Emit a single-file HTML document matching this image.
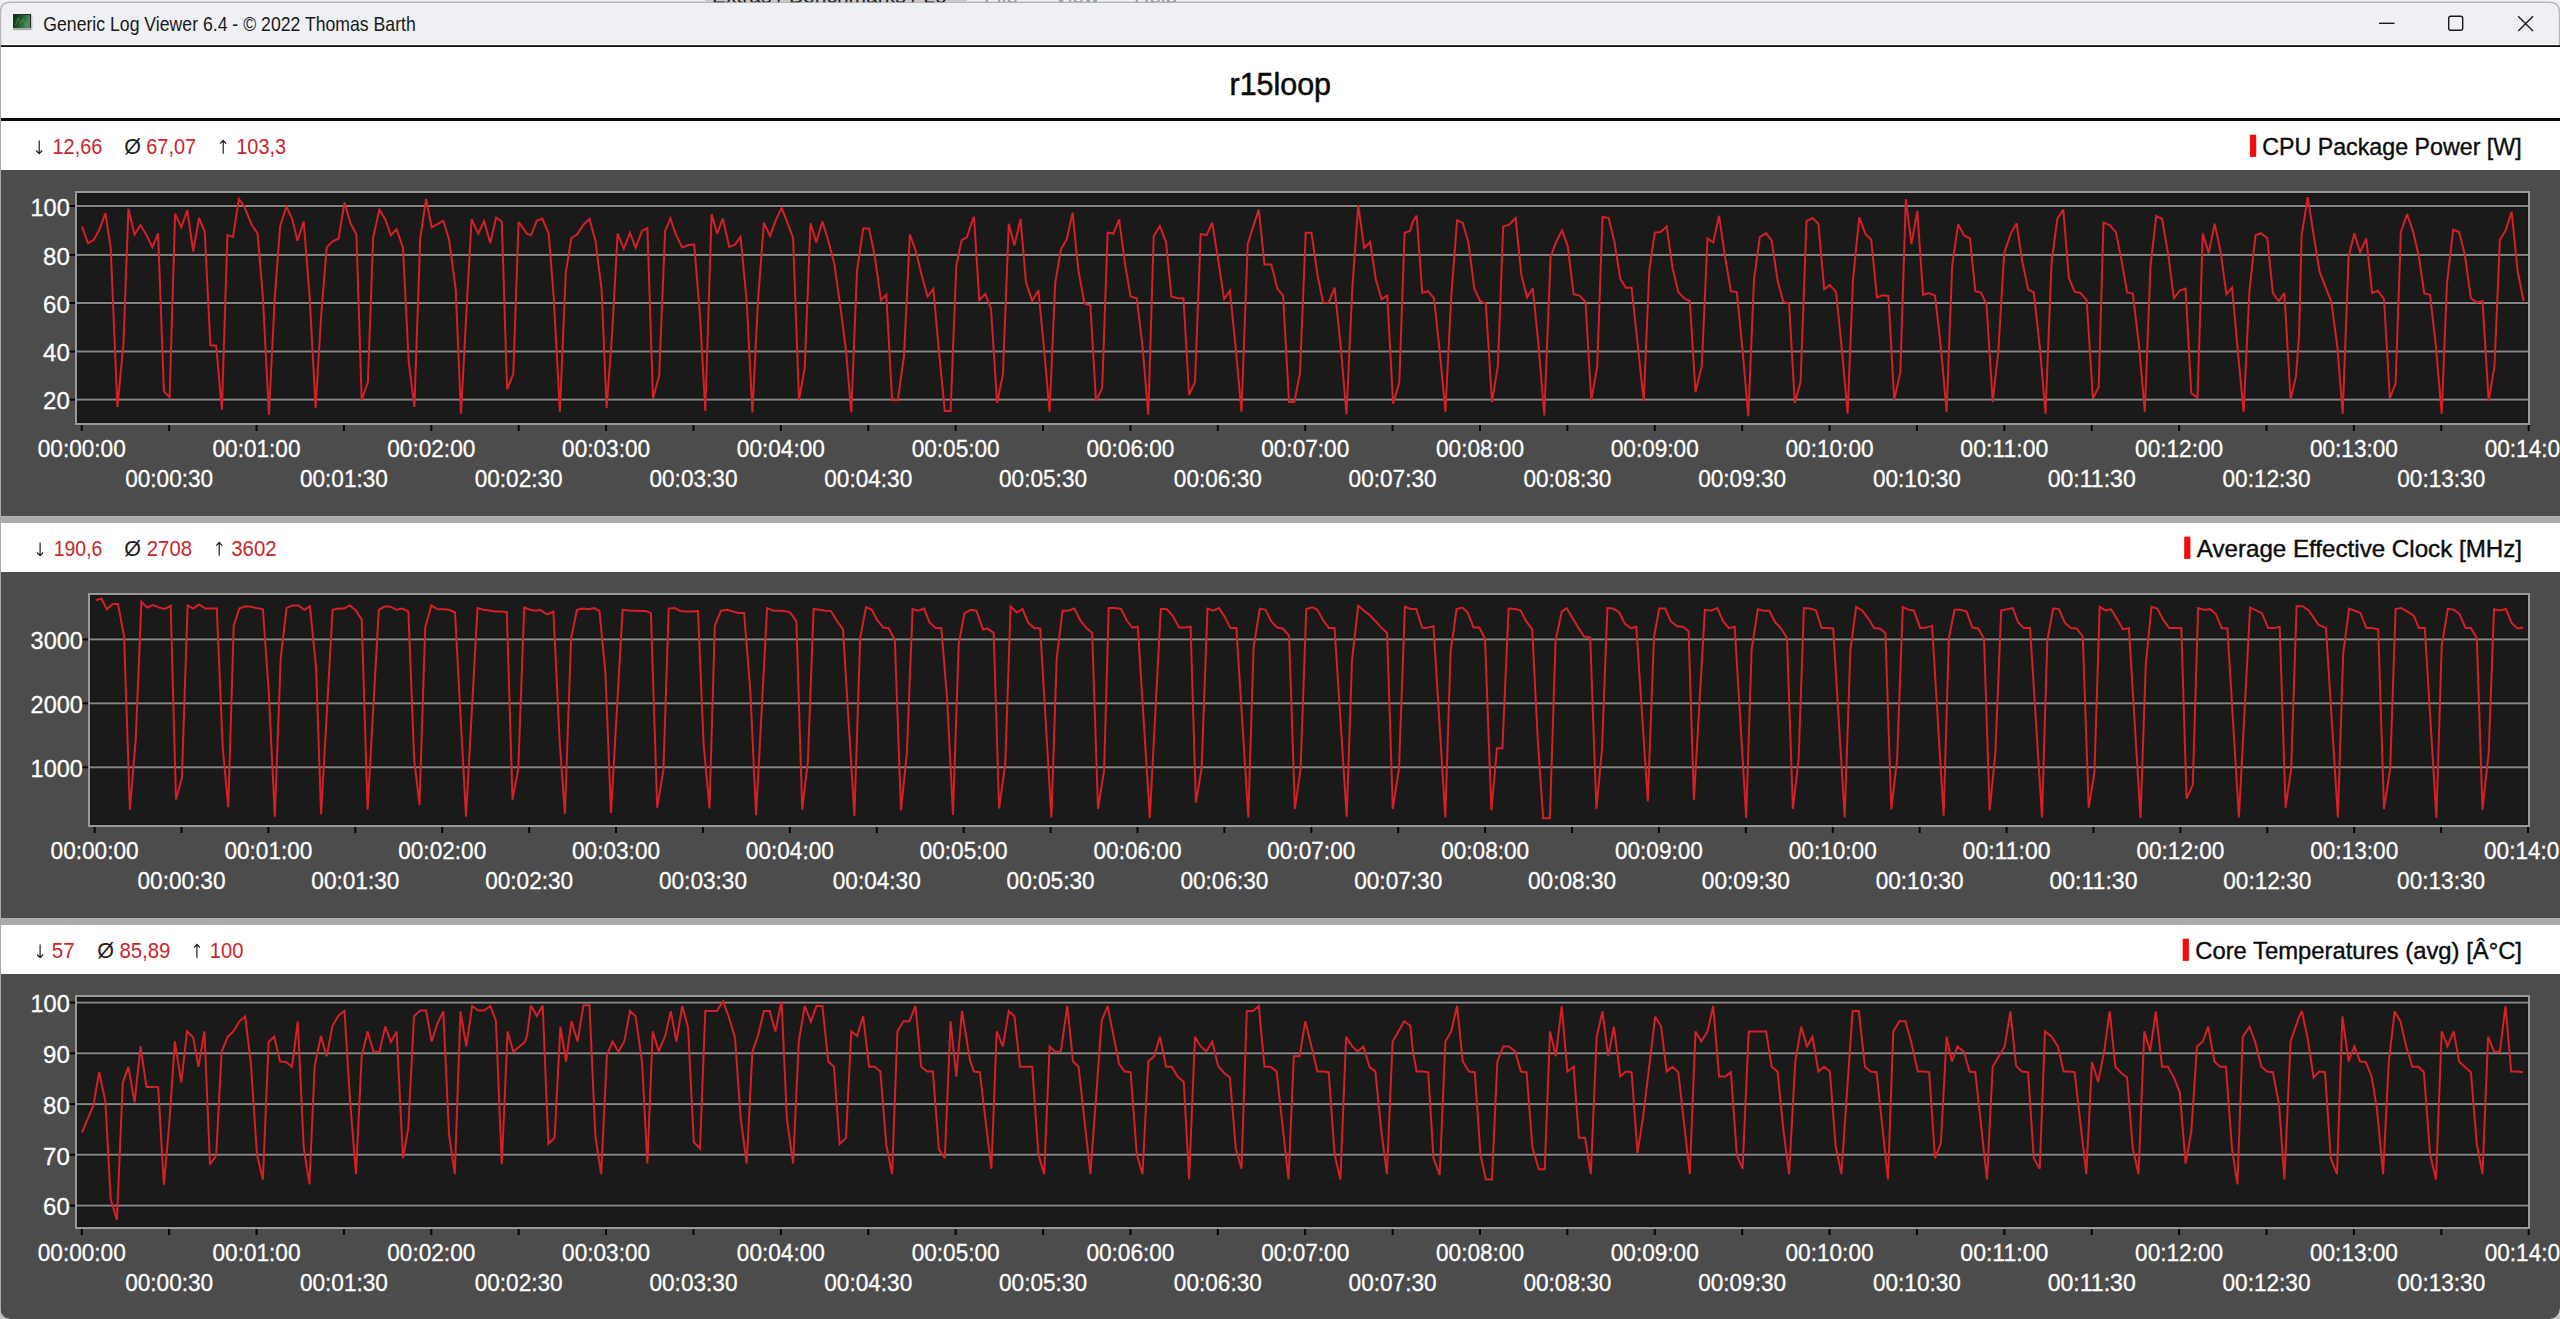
<!DOCTYPE html>
<html><head><meta charset="utf-8"><title>Generic Log Viewer</title>
<style>html,body{margin:0;padding:0;background:#fff;overflow:hidden}svg{display:block}text{font-family:"Liberation Sans", sans-serif}</style>
</head><body>
<svg width="2560" height="1319" viewBox="0 0 2560 1319">
<rect x="0" y="0" width="2560" height="1319" fill="#ffffff"/>
<rect x="0" y="0" width="2560" height="44" fill="#eff0f4"/>
<rect x="0" y="0" width="2560" height="1" fill="#f3f3f3"/>
<path d="M0.5 46 L0.5 12 Q0.5 2.2 10 2.2 L2549 2.2 Q2559.5 2.2 2559.5 12 L2559.5 46" fill="none" stroke="#b7b7bb" stroke-width="1.4"/>
<defs><linearGradient id="ig" x1="0" y1="0" x2="1" y2="0.3"><stop offset="0" stop-color="#0d2e12"/><stop offset="0.5" stop-color="#1f5a2a"/><stop offset="1" stop-color="#4d8a5c"/></linearGradient><clipPath id="menuclip"><rect x="0" y="0" width="2560" height="2.2"/></clipPath></defs>
<rect x="13" y="14" width="18" height="16" fill="#2a2a2a"/>
<rect x="14" y="15" width="16" height="13" fill="url(#ig)"/>
<path d="M15.5 25 L18 18 L20.5 23.5 L23 19 L25.5 25.5 L28.5 21" fill="none" stroke="#5aa86a" stroke-width="0.9" opacity="0.6"/>
<rect x="13" y="28" width="18" height="2.2" fill="#a9adaa"/>
<rect x="31" y="15" width="1.5" height="15" fill="#c4c6c8"/>
<g clip-path="url(#menuclip)"><rect x="705" y="0" width="262" height="2.2" fill="#c9c9cc"/><g font-size="21" fill="#222"><text x="712" y="2.5">Extras / Benchmarks / Lo</text></g><g font-size="21" fill="#9a9a9a"><text x="984" y="2.5">File</text><text x="1054" y="2.5">View</text><text x="1134" y="2.5">Help</text></g></g>
<text x="43.3" y="31.2" font-size="21" fill="#1a1a1a" text-anchor="start" textLength="372.5" lengthAdjust="spacingAndGlyphs">Generic Log Viewer 6.4 - © 2022 Thomas Barth</text>
<rect x="2379" y="22.6" width="15.5" height="1.4" fill="#1a1a1a"/>
<rect x="2448.7" y="16.2" width="14" height="14" rx="2" fill="none" stroke="#1a1a1a" stroke-width="1.4"/>
<path d="M2518.2 16.2 L2533 31 M2533 16.2 L2518.2 31" stroke="#1a1a1a" stroke-width="1.4"/>
<rect x="0" y="44" width="1" height="1275" fill="#a8a8a8"/>
<rect x="1" y="45.2" width="2559" height="1.8" fill="#0d0d0d"/>
<text x="1229.5" y="95" font-size="31" fill="#0a0a0a" text-anchor="start" textLength="101.5" lengthAdjust="spacingAndGlyphs" stroke="#0a0a0a" stroke-width="0.55">r15loop</text>
<rect x="1" y="118" width="2559" height="3" fill="#0a0a0a"/>
<rect x="1" y="516" width="2559" height="7" fill="#ababab"/>
<rect x="1" y="516" width="2559" height="1" fill="#b3b3b3"/>
<rect x="1" y="170" width="2559" height="346" fill="#4c4c4c"/>
<path d="M39.2 140.5 V153.2 M36.2 150.5 L39.2 153.7 L42.2 150.5" fill="none" stroke="#1e1e1e" stroke-width="1.2"/>
<text x="52.55" y="153.7" font-size="21.2" fill="#c8262c" text-anchor="start" textLength="49.7" lengthAdjust="spacingAndGlyphs">12,66</text>
<text x="124.2" y="153.7" font-size="21.5" fill="#1e1e1e" text-anchor="start">Ø</text>
<text x="146.3" y="153.7" font-size="21.2" fill="#c8262c" text-anchor="start" textLength="49.7" lengthAdjust="spacingAndGlyphs">67,07</text>
<path d="M223.2 153.7 V141.0 M220.2 143.7 L223.2 140.5 L226.2 143.7" fill="none" stroke="#1e1e1e" stroke-width="1.2"/>
<text x="236.3" y="153.7" font-size="21.2" fill="#c8262c" text-anchor="start" textLength="49.7" lengthAdjust="spacingAndGlyphs">103,3</text>
<rect x="2250" y="134.7" width="6.2" height="22.2" fill="#f20c0c"/>
<text x="2262.2" y="154.5" font-size="24.3" fill="#0c0c0c" text-anchor="start" textLength="259.5" lengthAdjust="spacingAndGlyphs" stroke="#0c0c0c" stroke-width="0.4">CPU Package Power [W]</text>
<rect x="75" y="191" width="2455" height="234" fill="#9a9a9a"/>
<rect x="77" y="193" width="2451" height="230" fill="#141414"/>
<rect x="78" y="194" width="2449" height="228" fill="#1a1a1a"/>
<rect x="77" y="204" width="2451" height="4" fill="#121212"/>
<rect x="77" y="205" width="2451" height="2" fill="#858585"/>
<rect x="69" y="205" width="6" height="2" fill="#050505"/>
<text x="69.8" y="215.8" font-size="24" fill="#ffffff" text-anchor="end" textLength="39.3" lengthAdjust="spacingAndGlyphs" stroke="#ffffff" stroke-width="0.3">100</text>
<rect x="77" y="252.9" width="2451" height="4" fill="#121212"/>
<rect x="77" y="253.9" width="2451" height="2" fill="#858585"/>
<rect x="69" y="253.9" width="6" height="2" fill="#050505"/>
<text x="69.8" y="264.7" font-size="24" fill="#ffffff" text-anchor="end" stroke="#ffffff" stroke-width="0.3">80</text>
<rect x="77" y="301" width="2451" height="4" fill="#121212"/>
<rect x="77" y="302" width="2451" height="2" fill="#858585"/>
<rect x="69" y="302" width="6" height="2" fill="#050505"/>
<text x="69.8" y="312.8" font-size="24" fill="#ffffff" text-anchor="end" stroke="#ffffff" stroke-width="0.3">60</text>
<rect x="77" y="349.5" width="2451" height="4" fill="#121212"/>
<rect x="77" y="350.5" width="2451" height="2" fill="#858585"/>
<rect x="69" y="350.5" width="6" height="2" fill="#050505"/>
<text x="69.8" y="361.3" font-size="24" fill="#ffffff" text-anchor="end" stroke="#ffffff" stroke-width="0.3">40</text>
<rect x="77" y="397.6" width="2451" height="4" fill="#121212"/>
<rect x="77" y="398.6" width="2451" height="2" fill="#858585"/>
<rect x="69" y="398.6" width="6" height="2" fill="#050505"/>
<text x="69.8" y="409.40000000000003" font-size="24" fill="#ffffff" text-anchor="end" stroke="#ffffff" stroke-width="0.3">20</text>
<rect x="80.75" y="425" width="2" height="6" fill="#050505"/>
<text x="81.75" y="457" font-size="24" fill="#ffffff" text-anchor="middle" textLength="88" lengthAdjust="spacingAndGlyphs" stroke="#ffffff" stroke-width="0.3">00:00:00</text>
<rect x="168.14" y="425" width="2" height="6" fill="#050505"/>
<text x="169.14" y="487" font-size="24" fill="#ffffff" text-anchor="middle" textLength="88" lengthAdjust="spacingAndGlyphs" stroke="#ffffff" stroke-width="0.3">00:00:30</text>
<rect x="255.52999999999997" y="425" width="2" height="6" fill="#050505"/>
<text x="256.53" y="457" font-size="24" fill="#ffffff" text-anchor="middle" textLength="88" lengthAdjust="spacingAndGlyphs" stroke="#ffffff" stroke-width="0.3">00:01:00</text>
<rect x="342.92" y="425" width="2" height="6" fill="#050505"/>
<text x="343.92" y="487" font-size="24" fill="#ffffff" text-anchor="middle" textLength="88" lengthAdjust="spacingAndGlyphs" stroke="#ffffff" stroke-width="0.3">00:01:30</text>
<rect x="430.31" y="425" width="2" height="6" fill="#050505"/>
<text x="431.31" y="457" font-size="24" fill="#ffffff" text-anchor="middle" textLength="88" lengthAdjust="spacingAndGlyphs" stroke="#ffffff" stroke-width="0.3">00:02:00</text>
<rect x="517.7" y="425" width="2" height="6" fill="#050505"/>
<text x="518.7" y="487" font-size="24" fill="#ffffff" text-anchor="middle" textLength="88" lengthAdjust="spacingAndGlyphs" stroke="#ffffff" stroke-width="0.3">00:02:30</text>
<rect x="605.09" y="425" width="2" height="6" fill="#050505"/>
<text x="606.09" y="457" font-size="24" fill="#ffffff" text-anchor="middle" textLength="88" lengthAdjust="spacingAndGlyphs" stroke="#ffffff" stroke-width="0.3">00:03:00</text>
<rect x="692.48" y="425" width="2" height="6" fill="#050505"/>
<text x="693.48" y="487" font-size="24" fill="#ffffff" text-anchor="middle" textLength="88" lengthAdjust="spacingAndGlyphs" stroke="#ffffff" stroke-width="0.3">00:03:30</text>
<rect x="779.87" y="425" width="2" height="6" fill="#050505"/>
<text x="780.87" y="457" font-size="24" fill="#ffffff" text-anchor="middle" textLength="88" lengthAdjust="spacingAndGlyphs" stroke="#ffffff" stroke-width="0.3">00:04:00</text>
<rect x="867.26" y="425" width="2" height="6" fill="#050505"/>
<text x="868.26" y="487" font-size="24" fill="#ffffff" text-anchor="middle" textLength="88" lengthAdjust="spacingAndGlyphs" stroke="#ffffff" stroke-width="0.3">00:04:30</text>
<rect x="954.65" y="425" width="2" height="6" fill="#050505"/>
<text x="955.65" y="457" font-size="24" fill="#ffffff" text-anchor="middle" textLength="88" lengthAdjust="spacingAndGlyphs" stroke="#ffffff" stroke-width="0.3">00:05:00</text>
<rect x="1042.04" y="425" width="2" height="6" fill="#050505"/>
<text x="1043.04" y="487" font-size="24" fill="#ffffff" text-anchor="middle" textLength="88" lengthAdjust="spacingAndGlyphs" stroke="#ffffff" stroke-width="0.3">00:05:30</text>
<rect x="1129.43" y="425" width="2" height="6" fill="#050505"/>
<text x="1130.43" y="457" font-size="24" fill="#ffffff" text-anchor="middle" textLength="88" lengthAdjust="spacingAndGlyphs" stroke="#ffffff" stroke-width="0.3">00:06:00</text>
<rect x="1216.82" y="425" width="2" height="6" fill="#050505"/>
<text x="1217.82" y="487" font-size="24" fill="#ffffff" text-anchor="middle" textLength="88" lengthAdjust="spacingAndGlyphs" stroke="#ffffff" stroke-width="0.3">00:06:30</text>
<rect x="1304.21" y="425" width="2" height="6" fill="#050505"/>
<text x="1305.21" y="457" font-size="24" fill="#ffffff" text-anchor="middle" textLength="88" lengthAdjust="spacingAndGlyphs" stroke="#ffffff" stroke-width="0.3">00:07:00</text>
<rect x="1391.6" y="425" width="2" height="6" fill="#050505"/>
<text x="1392.6" y="487" font-size="24" fill="#ffffff" text-anchor="middle" textLength="88" lengthAdjust="spacingAndGlyphs" stroke="#ffffff" stroke-width="0.3">00:07:30</text>
<rect x="1478.99" y="425" width="2" height="6" fill="#050505"/>
<text x="1479.99" y="457" font-size="24" fill="#ffffff" text-anchor="middle" textLength="88" lengthAdjust="spacingAndGlyphs" stroke="#ffffff" stroke-width="0.3">00:08:00</text>
<rect x="1566.38" y="425" width="2" height="6" fill="#050505"/>
<text x="1567.38" y="487" font-size="24" fill="#ffffff" text-anchor="middle" textLength="88" lengthAdjust="spacingAndGlyphs" stroke="#ffffff" stroke-width="0.3">00:08:30</text>
<rect x="1653.77" y="425" width="2" height="6" fill="#050505"/>
<text x="1654.77" y="457" font-size="24" fill="#ffffff" text-anchor="middle" textLength="88" lengthAdjust="spacingAndGlyphs" stroke="#ffffff" stroke-width="0.3">00:09:00</text>
<rect x="1741.16" y="425" width="2" height="6" fill="#050505"/>
<text x="1742.16" y="487" font-size="24" fill="#ffffff" text-anchor="middle" textLength="88" lengthAdjust="spacingAndGlyphs" stroke="#ffffff" stroke-width="0.3">00:09:30</text>
<rect x="1828.55" y="425" width="2" height="6" fill="#050505"/>
<text x="1829.55" y="457" font-size="24" fill="#ffffff" text-anchor="middle" textLength="88" lengthAdjust="spacingAndGlyphs" stroke="#ffffff" stroke-width="0.3">00:10:00</text>
<rect x="1915.94" y="425" width="2" height="6" fill="#050505"/>
<text x="1916.94" y="487" font-size="24" fill="#ffffff" text-anchor="middle" textLength="88" lengthAdjust="spacingAndGlyphs" stroke="#ffffff" stroke-width="0.3">00:10:30</text>
<rect x="2003.33" y="425" width="2" height="6" fill="#050505"/>
<text x="2004.33" y="457" font-size="24" fill="#ffffff" text-anchor="middle" textLength="88" lengthAdjust="spacingAndGlyphs" stroke="#ffffff" stroke-width="0.3">00:11:00</text>
<rect x="2090.7200000000003" y="425" width="2" height="6" fill="#050505"/>
<text x="2091.72" y="487" font-size="24" fill="#ffffff" text-anchor="middle" textLength="88" lengthAdjust="spacingAndGlyphs" stroke="#ffffff" stroke-width="0.3">00:11:30</text>
<rect x="2178.11" y="425" width="2" height="6" fill="#050505"/>
<text x="2179.11" y="457" font-size="24" fill="#ffffff" text-anchor="middle" textLength="88" lengthAdjust="spacingAndGlyphs" stroke="#ffffff" stroke-width="0.3">00:12:00</text>
<rect x="2265.5" y="425" width="2" height="6" fill="#050505"/>
<text x="2266.5" y="487" font-size="24" fill="#ffffff" text-anchor="middle" textLength="88" lengthAdjust="spacingAndGlyphs" stroke="#ffffff" stroke-width="0.3">00:12:30</text>
<rect x="2352.89" y="425" width="2" height="6" fill="#050505"/>
<text x="2353.89" y="457" font-size="24" fill="#ffffff" text-anchor="middle" textLength="88" lengthAdjust="spacingAndGlyphs" stroke="#ffffff" stroke-width="0.3">00:13:00</text>
<rect x="2440.28" y="425" width="2" height="6" fill="#050505"/>
<text x="2441.28" y="487" font-size="24" fill="#ffffff" text-anchor="middle" textLength="88" lengthAdjust="spacingAndGlyphs" stroke="#ffffff" stroke-width="0.3">00:13:30</text>
<rect x="2527.67" y="425" width="2" height="6" fill="#050505"/>
<text x="2528.67" y="457" font-size="24" fill="#ffffff" text-anchor="middle" textLength="88" lengthAdjust="spacingAndGlyphs" stroke="#ffffff" stroke-width="0.3">00:14:00</text>
<polyline points="82.0,226.5 88.0,243.3 93.8,239.8 99.2,230.0 105.4,213.2 110.7,247.8 117.4,407.0 123.5,343.5 128.4,208.7 134.6,234.5 140.5,225.1 146.2,234.5 152.4,247.4 158.1,233.6 163.9,391.4 169.6,397.1 175.1,213.7 181.3,227.4 187.3,210.2 193.2,251.3 199.0,218.0 204.7,231.8 210.4,345.3 216.2,345.7 221.9,409.7 227.4,235.3 233.1,236.8 238.8,199.0 243.7,205.2 251.7,224.7 257.6,233.6 262.9,297.4 268.9,414.8 274.8,297.4 280.1,226.5 286.3,206.6 292.1,218.5 297.5,240.7 303.7,221.5 309.7,297.4 315.6,408.3 321.2,315.2 326.7,247.4 332.4,241.5 338.6,238.5 344.5,202.5 350.7,223.8 356.4,234.5 361.7,400.3 367.9,381.7 373.2,237.1 379.4,209.6 385.3,219.4 390.9,235.3 396.6,229.1 403.0,247.8 408.7,361.3 414.4,407.0 420.2,238.9 426.1,199.0 431.7,227.4 437.9,223.8 443.3,220.8 449.1,239.8 455.7,289.4 461.0,413.6 467.2,297.4 471.6,219.4 478.2,233.6 484.1,221.2 490.3,243.3 496.1,217.6 501.8,221.5 507.1,389.3 513.3,373.7 518.6,222.0 527.0,233.6 531.0,235.3 536.8,220.8 542.2,218.5 548.7,233.6 553.7,297.4 559.9,411.8 565.8,272.6 571.4,238.0 577.1,234.5 583.5,224.7 589.5,219.0 595.4,240.7 601.6,289.4 606.6,408.3 612.2,332.9 617.6,233.6 623.8,248.6 630.0,232.7 635.6,247.8 642.0,230.9 647.4,228.2 653.0,398.5 659.2,375.5 665.1,230.9 670.4,218.5 676.1,235.3 682.3,247.4 688.5,245.1 694.2,244.6 700.0,315.2 705.3,410.9 711.6,214.1 717.2,233.6 722.7,218.5 729.3,246.9 735.0,244.6 740.5,236.8 746.7,301.0 752.4,412.4 758.2,297.4 763.9,222.6 770.1,236.2 775.4,221.2 781.6,207.8 787.5,222.9 793.1,238.0 799.0,399.9 804.7,368.4 810.5,223.3 816.2,242.4 822.4,221.5 828.3,240.7 834.3,263.7 840.1,304.5 846.0,350.6 851.3,412.4 857.0,270.8 863.2,228.6 869.1,228.6 874.7,255.7 880.9,300.1 886.3,294.8 892.1,400.3 897.8,400.3 904.0,356.0 909.9,234.5 915.9,251.3 921.7,275.2 927.6,296.5 933.3,288.9 938.9,350.6 944.8,410.9 950.6,410.9 956.3,265.5 961.6,240.3 967.0,237.1 970.0,227.4 974.0,216.7 979.3,300.1 985.2,293.9 991.0,308.9 997.1,403.0 1002.9,374.6 1008.8,223.8 1014.4,245.6 1020.6,219.0 1026.0,282.3 1032.2,301.0 1038.4,290.3 1044.2,350.6 1049.6,411.8 1055.2,283.2 1060.9,249.5 1066.8,239.2 1072.6,212.6 1078.3,269.9 1084.5,303.6 1090.4,305.4 1096.0,401.2 1102.2,387.9 1107.6,232.7 1113.4,233.6 1119.1,219.4 1125.3,265.5 1130.6,296.5 1136.8,298.3 1142.5,346.2 1148.3,414.8 1153.7,236.2 1159.9,226.1 1166.1,242.4 1171.4,296.5 1177.6,298.3 1183.5,298.3 1189.1,395.0 1195.0,381.7 1200.7,233.9 1206.5,235.3 1212.2,222.6 1218.4,261.1 1224.1,299.2 1229.9,290.7 1235.8,348.9 1241.5,411.8 1247.7,244.2 1253.5,225.6 1258.8,209.6 1264.5,264.6 1271.3,264.6 1277.3,288.6 1283.1,295.6 1289.0,402.1 1294.3,402.1 1300.0,372.8 1305.7,232.7 1311.5,232.7 1317.7,276.1 1323.1,302.4 1328.7,302.7 1334.6,287.7 1340.8,347.1 1346.5,414.5 1352.3,288.6 1358.2,205.2 1364.2,247.8 1370.1,242.1 1375.9,279.7 1381.6,299.2 1387.3,295.6 1393.1,403.8 1399.3,382.6 1404.6,232.7 1410.0,230.9 1413.0,221.2 1416.6,215.5 1422.3,293.0 1428.2,291.2 1434.0,298.3 1439.7,350.6 1445.4,411.8 1451.2,297.4 1457.1,220.3 1462.8,222.9 1468.4,242.4 1474.3,288.6 1480.1,301.0 1485.8,303.6 1492.0,402.1 1497.9,365.7 1503.2,226.5 1509.2,224.7 1515.6,218.0 1521.3,274.4 1527.0,297.4 1532.8,288.2 1538.7,347.1 1544.3,415.4 1550.6,256.6 1556.4,241.5 1562.1,230.4 1567.8,246.3 1573.6,294.2 1579.5,295.6 1585.5,301.9 1591.3,400.3 1597.2,366.6 1602.5,216.7 1608.6,218.0 1614.4,241.5 1620.3,278.8 1625.9,287.7 1631.6,287.7 1638.0,347.1 1643.7,401.2 1649.3,270.8 1654.7,232.7 1660.5,232.1 1666.7,226.5 1672.4,267.3 1678.3,292.1 1684.1,298.3 1689.8,301.0 1695.5,392.3 1701.8,365.7 1707.5,238.5 1713.2,242.4 1719.1,215.8 1725.3,258.4 1730.9,291.2 1736.8,292.1 1742.6,350.6 1748.3,416.3 1754.0,279.7 1759.8,237.1 1766.1,233.2 1771.7,240.7 1777.6,280.6 1783.4,301.9 1789.1,303.6 1794.8,403.0 1800.6,381.7 1806.5,221.2 1812.5,218.0 1818.4,223.8 1824.2,289.4 1829.9,285.0 1836.1,292.1 1842.0,350.6 1847.6,413.6 1853.0,279.7 1856.0,249.5 1859.3,217.3 1865.3,233.6 1871.2,239.8 1877.0,297.4 1882.7,295.3 1888.4,296.0 1894.2,399.9 1900.4,371.9 1905.8,199.0 1911.4,244.2 1917.3,210.9 1923.1,294.8 1928.8,293.0 1935.0,295.6 1940.9,347.1 1946.6,411.8 1952.2,265.5 1958.1,224.3 1963.9,235.3 1970.0,238.5 1975.3,291.2 1981.1,292.5 1986.5,304.5 1992.7,402.1 1998.3,351.5 2004.2,253.1 2010.8,233.6 2016.6,223.3 2021.9,259.3 2028.1,289.4 2033.8,292.5 2040.2,350.6 2045.5,413.6 2051.6,261.9 2057.4,218.5 2063.3,209.6 2068.9,277.9 2074.6,291.7 2080.5,293.0 2086.7,300.1 2092.9,398.5 2098.7,387.0 2103.5,222.6 2109.7,225.1 2115.9,232.1 2121.8,261.9 2127.1,292.5 2132.8,293.5 2139.0,345.3 2144.8,411.8 2150.5,266.4 2156.2,215.8 2162.1,219.0 2168.3,254.9 2173.9,298.3 2179.8,290.7 2185.6,288.6 2191.3,393.2 2197.5,397.6 2202.8,233.6 2208.7,253.1 2214.7,223.8 2220.6,251.3 2226.4,294.2 2232.1,287.7 2237.8,350.6 2243.6,411.8 2249.5,290.3 2255.5,235.3 2260.8,233.2 2267.2,238.0 2272.9,293.0 2278.6,301.3 2284.4,293.0 2290.6,399.4 2296.0,376.3 2299.0,336.4 2301.6,235.3 2307.8,197.2 2314.0,237.1 2319.6,271.7 2325.5,286.8 2331.4,301.9 2337.4,347.1 2342.7,413.6 2348.6,256.6 2354.4,233.2 2360.1,252.2 2366.3,238.5 2372.1,293.0 2377.8,290.7 2384.0,299.2 2389.9,398.5 2395.6,383.4 2400.9,232.1 2407.1,214.1 2412.9,230.9 2418.6,254.9 2424.3,293.5 2430.1,294.8 2436.0,347.1 2441.7,413.6 2447.0,283.2 2453.2,229.7 2459.1,232.1 2464.7,254.0 2470.9,298.3 2476.8,302.4 2482.5,301.0 2488.7,401.2 2494.5,365.7 2499.9,239.8 2505.5,230.9 2511.7,211.9 2517.6,270.8 2523.6,301.0" fill="none" stroke="#d42026" stroke-width="2" stroke-linejoin="miter" stroke-miterlimit="3"/>
<rect x="1" y="918" width="2559" height="7" fill="#ababab"/>
<rect x="1" y="918" width="2559" height="1" fill="#b3b3b3"/>
<rect x="1" y="572" width="2559" height="346" fill="#4c4c4c"/>
<path d="M40.1 542.5 V555.2 M37.1 552.5 L40.1 555.7 L43.1 552.5" fill="none" stroke="#1e1e1e" stroke-width="1.2"/>
<text x="53.8" y="555.7" font-size="21.2" fill="#c8262c" text-anchor="start" textLength="48.5" lengthAdjust="spacingAndGlyphs">190,6</text>
<text x="124.2" y="555.7" font-size="21.5" fill="#1e1e1e" text-anchor="start">Ø</text>
<text x="146.8" y="555.7" font-size="21.2" fill="#c8262c" text-anchor="start" textLength="45.2" lengthAdjust="spacingAndGlyphs">2708</text>
<path d="M219.2 555.7 V543.0 M216.2 545.7 L219.2 542.5 L222.2 545.7" fill="none" stroke="#1e1e1e" stroke-width="1.2"/>
<text x="231.3" y="555.7" font-size="21.2" fill="#c8262c" text-anchor="start" textLength="45.3" lengthAdjust="spacingAndGlyphs">3602</text>
<rect x="2184.2" y="536.7" width="6.2" height="22.2" fill="#f20c0c"/>
<text x="2196.8" y="556.5" font-size="24.3" fill="#0c0c0c" text-anchor="start" textLength="325.2" lengthAdjust="spacingAndGlyphs" stroke="#0c0c0c" stroke-width="0.4">Average Effective Clock [MHz]</text>
<rect x="88" y="593" width="2442" height="234" fill="#9a9a9a"/>
<rect x="90" y="595" width="2438" height="230" fill="#141414"/>
<rect x="91" y="596" width="2436" height="228" fill="#1a1a1a"/>
<rect x="90" y="637.4" width="2438" height="4" fill="#121212"/>
<rect x="90" y="638.4" width="2438" height="2" fill="#858585"/>
<rect x="82" y="638.4" width="6" height="2" fill="#050505"/>
<text x="82.8" y="649.1999999999999" font-size="24" fill="#ffffff" text-anchor="end" textLength="52.2" lengthAdjust="spacingAndGlyphs" stroke="#ffffff" stroke-width="0.3">3000</text>
<rect x="90" y="701.35" width="2438" height="4" fill="#121212"/>
<rect x="90" y="702.35" width="2438" height="2" fill="#858585"/>
<rect x="82" y="702.35" width="6" height="2" fill="#050505"/>
<text x="82.8" y="713.15" font-size="24" fill="#ffffff" text-anchor="end" textLength="52.2" lengthAdjust="spacingAndGlyphs" stroke="#ffffff" stroke-width="0.3">2000</text>
<rect x="90" y="765.3" width="2438" height="4" fill="#121212"/>
<rect x="90" y="766.3" width="2438" height="2" fill="#858585"/>
<rect x="82" y="766.3" width="6" height="2" fill="#050505"/>
<text x="82.8" y="777.0999999999999" font-size="24" fill="#ffffff" text-anchor="end" textLength="52.2" lengthAdjust="spacingAndGlyphs" stroke="#ffffff" stroke-width="0.3">1000</text>
<rect x="93.6" y="827" width="2" height="6" fill="#050505"/>
<text x="94.6" y="859" font-size="24" fill="#ffffff" text-anchor="middle" textLength="88" lengthAdjust="spacingAndGlyphs" stroke="#ffffff" stroke-width="0.3">00:00:00</text>
<rect x="180.50799999999998" y="827" width="2" height="6" fill="#050505"/>
<text x="181.51" y="889" font-size="24" fill="#ffffff" text-anchor="middle" textLength="88" lengthAdjust="spacingAndGlyphs" stroke="#ffffff" stroke-width="0.3">00:00:30</text>
<rect x="267.416" y="827" width="2" height="6" fill="#050505"/>
<text x="268.42" y="859" font-size="24" fill="#ffffff" text-anchor="middle" textLength="88" lengthAdjust="spacingAndGlyphs" stroke="#ffffff" stroke-width="0.3">00:01:00</text>
<rect x="354.32399999999996" y="827" width="2" height="6" fill="#050505"/>
<text x="355.32" y="889" font-size="24" fill="#ffffff" text-anchor="middle" textLength="88" lengthAdjust="spacingAndGlyphs" stroke="#ffffff" stroke-width="0.3">00:01:30</text>
<rect x="441.23199999999997" y="827" width="2" height="6" fill="#050505"/>
<text x="442.23" y="859" font-size="24" fill="#ffffff" text-anchor="middle" textLength="88" lengthAdjust="spacingAndGlyphs" stroke="#ffffff" stroke-width="0.3">00:02:00</text>
<rect x="528.14" y="827" width="2" height="6" fill="#050505"/>
<text x="529.14" y="889" font-size="24" fill="#ffffff" text-anchor="middle" textLength="88" lengthAdjust="spacingAndGlyphs" stroke="#ffffff" stroke-width="0.3">00:02:30</text>
<rect x="615.048" y="827" width="2" height="6" fill="#050505"/>
<text x="616.05" y="859" font-size="24" fill="#ffffff" text-anchor="middle" textLength="88" lengthAdjust="spacingAndGlyphs" stroke="#ffffff" stroke-width="0.3">00:03:00</text>
<rect x="701.956" y="827" width="2" height="6" fill="#050505"/>
<text x="702.96" y="889" font-size="24" fill="#ffffff" text-anchor="middle" textLength="88" lengthAdjust="spacingAndGlyphs" stroke="#ffffff" stroke-width="0.3">00:03:30</text>
<rect x="788.864" y="827" width="2" height="6" fill="#050505"/>
<text x="789.86" y="859" font-size="24" fill="#ffffff" text-anchor="middle" textLength="88" lengthAdjust="spacingAndGlyphs" stroke="#ffffff" stroke-width="0.3">00:04:00</text>
<rect x="875.772" y="827" width="2" height="6" fill="#050505"/>
<text x="876.77" y="889" font-size="24" fill="#ffffff" text-anchor="middle" textLength="88" lengthAdjust="spacingAndGlyphs" stroke="#ffffff" stroke-width="0.3">00:04:30</text>
<rect x="962.6800000000001" y="827" width="2" height="6" fill="#050505"/>
<text x="963.68" y="859" font-size="24" fill="#ffffff" text-anchor="middle" textLength="88" lengthAdjust="spacingAndGlyphs" stroke="#ffffff" stroke-width="0.3">00:05:00</text>
<rect x="1049.588" y="827" width="2" height="6" fill="#050505"/>
<text x="1050.59" y="889" font-size="24" fill="#ffffff" text-anchor="middle" textLength="88" lengthAdjust="spacingAndGlyphs" stroke="#ffffff" stroke-width="0.3">00:05:30</text>
<rect x="1136.4959999999999" y="827" width="2" height="6" fill="#050505"/>
<text x="1137.5" y="859" font-size="24" fill="#ffffff" text-anchor="middle" textLength="88" lengthAdjust="spacingAndGlyphs" stroke="#ffffff" stroke-width="0.3">00:06:00</text>
<rect x="1223.404" y="827" width="2" height="6" fill="#050505"/>
<text x="1224.4" y="889" font-size="24" fill="#ffffff" text-anchor="middle" textLength="88" lengthAdjust="spacingAndGlyphs" stroke="#ffffff" stroke-width="0.3">00:06:30</text>
<rect x="1310.312" y="827" width="2" height="6" fill="#050505"/>
<text x="1311.31" y="859" font-size="24" fill="#ffffff" text-anchor="middle" textLength="88" lengthAdjust="spacingAndGlyphs" stroke="#ffffff" stroke-width="0.3">00:07:00</text>
<rect x="1397.22" y="827" width="2" height="6" fill="#050505"/>
<text x="1398.22" y="889" font-size="24" fill="#ffffff" text-anchor="middle" textLength="88" lengthAdjust="spacingAndGlyphs" stroke="#ffffff" stroke-width="0.3">00:07:30</text>
<rect x="1484.128" y="827" width="2" height="6" fill="#050505"/>
<text x="1485.13" y="859" font-size="24" fill="#ffffff" text-anchor="middle" textLength="88" lengthAdjust="spacingAndGlyphs" stroke="#ffffff" stroke-width="0.3">00:08:00</text>
<rect x="1571.0359999999998" y="827" width="2" height="6" fill="#050505"/>
<text x="1572.04" y="889" font-size="24" fill="#ffffff" text-anchor="middle" textLength="88" lengthAdjust="spacingAndGlyphs" stroke="#ffffff" stroke-width="0.3">00:08:30</text>
<rect x="1657.944" y="827" width="2" height="6" fill="#050505"/>
<text x="1658.94" y="859" font-size="24" fill="#ffffff" text-anchor="middle" textLength="88" lengthAdjust="spacingAndGlyphs" stroke="#ffffff" stroke-width="0.3">00:09:00</text>
<rect x="1744.8519999999999" y="827" width="2" height="6" fill="#050505"/>
<text x="1745.85" y="889" font-size="24" fill="#ffffff" text-anchor="middle" textLength="88" lengthAdjust="spacingAndGlyphs" stroke="#ffffff" stroke-width="0.3">00:09:30</text>
<rect x="1831.76" y="827" width="2" height="6" fill="#050505"/>
<text x="1832.76" y="859" font-size="24" fill="#ffffff" text-anchor="middle" textLength="88" lengthAdjust="spacingAndGlyphs" stroke="#ffffff" stroke-width="0.3">00:10:00</text>
<rect x="1918.668" y="827" width="2" height="6" fill="#050505"/>
<text x="1919.67" y="889" font-size="24" fill="#ffffff" text-anchor="middle" textLength="88" lengthAdjust="spacingAndGlyphs" stroke="#ffffff" stroke-width="0.3">00:10:30</text>
<rect x="2005.576" y="827" width="2" height="6" fill="#050505"/>
<text x="2006.58" y="859" font-size="24" fill="#ffffff" text-anchor="middle" textLength="88" lengthAdjust="spacingAndGlyphs" stroke="#ffffff" stroke-width="0.3">00:11:00</text>
<rect x="2092.484" y="827" width="2" height="6" fill="#050505"/>
<text x="2093.48" y="889" font-size="24" fill="#ffffff" text-anchor="middle" textLength="88" lengthAdjust="spacingAndGlyphs" stroke="#ffffff" stroke-width="0.3">00:11:30</text>
<rect x="2179.392" y="827" width="2" height="6" fill="#050505"/>
<text x="2180.39" y="859" font-size="24" fill="#ffffff" text-anchor="middle" textLength="88" lengthAdjust="spacingAndGlyphs" stroke="#ffffff" stroke-width="0.3">00:12:00</text>
<rect x="2266.2999999999997" y="827" width="2" height="6" fill="#050505"/>
<text x="2267.3" y="889" font-size="24" fill="#ffffff" text-anchor="middle" textLength="88" lengthAdjust="spacingAndGlyphs" stroke="#ffffff" stroke-width="0.3">00:12:30</text>
<rect x="2353.208" y="827" width="2" height="6" fill="#050505"/>
<text x="2354.21" y="859" font-size="24" fill="#ffffff" text-anchor="middle" textLength="88" lengthAdjust="spacingAndGlyphs" stroke="#ffffff" stroke-width="0.3">00:13:00</text>
<rect x="2440.116" y="827" width="2" height="6" fill="#050505"/>
<text x="2441.12" y="889" font-size="24" fill="#ffffff" text-anchor="middle" textLength="88" lengthAdjust="spacingAndGlyphs" stroke="#ffffff" stroke-width="0.3">00:13:30</text>
<rect x="2527.024" y="827" width="2" height="6" fill="#050505"/>
<text x="2528.02" y="859" font-size="24" fill="#ffffff" text-anchor="middle" textLength="88" lengthAdjust="spacingAndGlyphs" stroke="#ffffff" stroke-width="0.3">00:14:00</text>
<polyline points="95.7,600.1 101.5,598.7 106.8,609.3 112.7,604.0 118.0,604.0 124.1,636.5 129.9,809.7 135.8,738.4 141.4,601.9 147.1,607.5 153.0,605.1 159.2,607.5 164.5,609.0 170.7,605.8 176.0,799.6 181.9,777.5 187.6,605.4 193.2,608.6 199.1,604.5 205.3,608.6 211.0,608.6 216.8,608.6 222.7,747.3 228.3,807.3 233.7,625.8 239.3,608.6 245.2,606.3 251.1,606.8 256.7,608.1 262.9,609.3 268.8,692.3 274.8,816.8 280.7,658.6 286.5,608.1 292.2,605.4 298.4,605.4 304.3,609.8 309.9,606.3 316.1,667.5 321.1,814.4 332.6,609.8 338.3,608.6 344.0,608.6 349.8,605.4 356.1,610.7 361.7,619.6 367.6,809.4 378.8,609.8 384.8,606.3 390.6,606.8 396.5,609.8 402.5,608.6 408.4,611.6 414.2,759.7 419.5,805.0 425.2,627.6 431.4,605.4 437.3,609.3 443.0,609.3 449.2,609.8 455.0,612.5 466.0,816.8 477.5,608.1 483.4,609.8 489.4,610.4 495.3,611.6 501.1,611.6 506.8,612.2 512.5,799.6 518.3,768.6 524.2,607.5 530.2,609.8 536.1,610.7 540.0,609.8 547.2,614.3 553.4,611.6 559.6,740.2 564.9,813.8 571.1,638.2 577.0,609.8 582.7,608.6 588.0,609.3 594.2,608.1 599.5,611.1 605.4,672.8 611.0,812.9 622.6,609.8 628.8,610.4 634.5,610.7 640.3,611.1 645.6,611.1 650.9,612.9 657.2,807.6 663.4,770.4 668.7,608.6 674.9,608.1 680.2,611.1 685.9,611.6 691.7,611.6 698.0,611.1 703.6,743.8 709.5,808.5 714.8,625.8 721.0,610.7 727.2,609.8 733.1,611.6 738.7,612.9 744.1,612.9 750.3,690.6 756.1,815.1 767.1,608.1 773.3,610.7 779.2,610.7 784.9,611.1 790.2,612.5 796.4,621.4 802.2,809.7 807.9,761.5 813.6,609.0 819.4,609.8 825.3,610.7 831.0,611.1 837.2,621.4 843.0,629.4 854.4,816.1 860.2,637.3 866.1,607.2 871.8,609.8 877.4,620.5 883.3,627.6 888.6,628.1 894.8,640.0 901.0,810.3 906.9,752.6 912.6,609.0 918.2,610.7 924.1,608.6 929.4,622.3 935.6,628.1 941.3,628.1 947.2,699.4 953.0,814.7 958.7,644.4 964.4,613.4 970.7,609.8 976.4,610.7 983.0,629.4 987.5,628.5 993.7,632.9 999.1,808.5 1005.3,763.3 1010.6,606.3 1016.8,612.5 1022.5,609.0 1028.3,622.8 1034.2,628.1 1040.2,628.5 1051.4,817.4 1056.7,658.6 1062.6,610.7 1068.2,610.7 1074.4,608.6 1080.3,620.5 1086.0,627.6 1092.2,632.9 1098.0,809.0 1104.1,770.4 1108.7,608.1 1115.2,608.1 1121.1,609.0 1126.8,620.5 1132.4,627.6 1137.8,626.7 1149.8,817.9 1160.8,609.0 1166.7,609.0 1172.9,616.1 1179.1,627.6 1184.4,627.6 1190.6,626.7 1195.9,802.6 1201.6,768.6 1207.5,608.6 1213.3,610.7 1219.0,608.1 1224.3,616.1 1230.5,628.1 1236.4,628.1 1248.3,817.4 1253.6,647.1 1259.8,608.6 1265.5,609.8 1271.3,621.4 1277.2,627.6 1282.8,628.5 1289.1,635.6 1294.9,809.0 1300.6,768.6 1306.3,609.0 1312.1,607.2 1317.4,609.8 1323.3,620.5 1329.0,628.1 1334.6,628.1 1346.7,816.8 1352.0,660.4 1358.2,605.8 1364.1,610.7 1369.8,615.2 1376.0,621.7 1381.8,628.1 1387.1,632.9 1392.8,809.0 1399.0,768.6 1404.9,606.8 1410.6,609.0 1416.2,609.0 1422.1,627.6 1426.0,628.1 1433.5,626.3 1445.3,817.4 1450.6,651.5 1456.6,609.0 1462.5,607.5 1467.8,612.9 1473.6,627.6 1479.3,627.6 1485.0,638.8 1491.4,810.3 1497.0,748.2 1502.4,748.2 1508.6,608.6 1514.8,609.0 1520.5,610.4 1526.3,621.4 1532.2,629.4 1537.8,740.2 1543.2,818.3 1549.9,818.3 1555.6,640.0 1561.8,611.6 1566.6,608.1 1572.4,617.8 1578.3,627.6 1584.0,636.5 1590.2,637.3 1596.4,809.0 1602.0,749.1 1607.4,608.1 1613.2,608.6 1619.1,612.2 1624.7,623.5 1631.0,628.1 1636.3,626.7 1647.8,801.4 1654.0,637.3 1659.3,608.6 1665.2,608.6 1670.9,621.4 1677.1,626.3 1682.9,626.7 1688.6,631.1 1693.9,799.6 1704.9,609.8 1711.3,610.7 1717.3,608.1 1723.2,621.4 1729.0,628.1 1734.7,626.7 1746.2,817.9 1751.6,649.8 1757.8,609.3 1764.0,610.7 1769.3,610.7 1775.2,622.3 1781.2,628.5 1787.0,638.2 1792.9,809.0 1798.6,759.7 1803.9,608.1 1809.6,608.6 1815.9,610.4 1821.6,628.1 1827.3,628.1 1833.2,628.5 1844.7,817.4 1850.4,649.8 1856.2,606.8 1862.4,610.7 1869.0,619.6 1874.1,628.1 1879.7,628.5 1885.4,632.9 1891.3,809.4 1897.1,759.7 1902.8,606.8 1908.5,609.8 1913.8,610.4 1920.2,628.1 1926.2,627.6 1932.1,625.8 1943.6,815.6 1948.9,638.2 1954.6,609.8 1960.4,609.8 1966.6,611.6 1972.3,627.6 1978.2,628.5 1984.0,638.8 1989.7,810.3 1995.4,752.6 2001.2,610.4 2007.1,609.3 2012.8,608.1 2018.1,622.3 2023.8,628.1 2030.1,628.1 2042.0,817.4 2047.3,640.9 2053.2,608.6 2058.9,609.0 2065.1,623.2 2070.9,628.1 2076.6,628.5 2082.8,636.5 2088.7,807.6 2094.4,773.0 2099.7,606.8 2105.3,610.4 2111.2,609.3 2117.1,619.3 2123.1,629.4 2128.9,628.1 2140.5,817.9 2145.8,663.9 2151.5,606.8 2157.3,608.6 2163.2,619.6 2169.2,628.1 2175.1,628.1 2181.3,628.1 2186.6,798.7 2192.8,784.6 2198.1,608.1 2204.0,609.8 2210.0,609.3 2215.8,613.9 2221.7,628.1 2227.4,628.5 2238.9,817.4 2250.1,607.5 2256.1,610.4 2262.0,613.4 2268.2,628.1 2273.8,628.1 2279.7,626.7 2285.6,807.6 2291.2,768.6 2296.6,606.3 2302.8,606.3 2309.0,610.7 2312.0,615.2 2318.4,624.6 2326.0,628.1 2337.9,817.4 2343.2,653.3 2349.1,608.6 2354.8,610.7 2360.4,612.9 2366.3,628.1 2372.1,628.1 2378.2,629.4 2384.0,809.0 2390.2,768.6 2395.6,609.0 2401.2,608.1 2407.6,611.6 2413.7,615.7 2419.0,628.1 2424.8,628.1 2436.4,817.9 2441.7,646.2 2447.9,608.6 2453.7,609.8 2459.4,613.9 2465.6,628.1 2470.9,628.1 2476.8,638.2 2482.5,809.7 2488.7,752.6 2494.0,609.3 2499.9,610.4 2505.9,609.0 2511.7,623.2 2517.6,628.5 2523.3,627.6" fill="none" stroke="#d42026" stroke-width="2" stroke-linejoin="miter" stroke-miterlimit="3"/>
<rect x="1" y="974" width="2559" height="345" fill="#4c4c4c"/>
<path d="M40.1 944.5 V957.2 M37.1 954.5 L40.1 957.7 L43.1 954.5" fill="none" stroke="#1e1e1e" stroke-width="1.2"/>
<text x="51.8" y="957.7" font-size="21.2" fill="#c8262c" text-anchor="start" textLength="22.9" lengthAdjust="spacingAndGlyphs">57</text>
<text x="97.2" y="957.7" font-size="21.5" fill="#1e1e1e" text-anchor="start">Ø</text>
<text x="119.39999999999999" y="957.7" font-size="21.2" fill="#c8262c" text-anchor="start" textLength="51.0" lengthAdjust="spacingAndGlyphs">85,89</text>
<path d="M196.9 957.7 V945.0 M193.9 947.7 L196.9 944.5 L199.9 947.7" fill="none" stroke="#1e1e1e" stroke-width="1.2"/>
<text x="209.8" y="957.7" font-size="21.2" fill="#c8262c" text-anchor="start" textLength="33.7" lengthAdjust="spacingAndGlyphs">100</text>
<rect x="2182.7" y="938.7" width="6.2" height="22.2" fill="#f20c0c"/>
<text x="2195.2" y="958.5" font-size="24.3" fill="#0c0c0c" text-anchor="start" textLength="326.8" lengthAdjust="spacingAndGlyphs" stroke="#0c0c0c" stroke-width="0.4">Core Temperatures (avg) [Â°C]</text>
<rect x="75" y="995" width="2455" height="234" fill="#9a9a9a"/>
<rect x="77" y="997" width="2451" height="230" fill="#141414"/>
<rect x="78" y="998" width="2449" height="228" fill="#1a1a1a"/>
<rect x="77" y="1000.6" width="2451" height="4" fill="#121212"/>
<rect x="77" y="1001.6" width="2451" height="2" fill="#858585"/>
<rect x="69" y="1001.6" width="6" height="2" fill="#050505"/>
<text x="69.8" y="1012.4" font-size="24" fill="#ffffff" text-anchor="end" textLength="39.3" lengthAdjust="spacingAndGlyphs" stroke="#ffffff" stroke-width="0.3">100</text>
<rect x="77" y="1051.3" width="2451" height="4" fill="#121212"/>
<rect x="77" y="1052.3" width="2451" height="2" fill="#858585"/>
<rect x="69" y="1052.3" width="6" height="2" fill="#050505"/>
<text x="69.8" y="1063.1" font-size="24" fill="#ffffff" text-anchor="end" stroke="#ffffff" stroke-width="0.3">90</text>
<rect x="77" y="1102.1" width="2451" height="4" fill="#121212"/>
<rect x="77" y="1103.1" width="2451" height="2" fill="#858585"/>
<rect x="69" y="1103.1" width="6" height="2" fill="#050505"/>
<text x="69.8" y="1113.8999999999999" font-size="24" fill="#ffffff" text-anchor="end" stroke="#ffffff" stroke-width="0.3">80</text>
<rect x="77" y="1152.7" width="2451" height="4" fill="#121212"/>
<rect x="77" y="1153.7" width="2451" height="2" fill="#858585"/>
<rect x="69" y="1153.7" width="6" height="2" fill="#050505"/>
<text x="69.8" y="1164.5" font-size="24" fill="#ffffff" text-anchor="end" stroke="#ffffff" stroke-width="0.3">70</text>
<rect x="77" y="1203.6" width="2451" height="4" fill="#121212"/>
<rect x="77" y="1204.6" width="2451" height="2" fill="#858585"/>
<rect x="69" y="1204.6" width="6" height="2" fill="#050505"/>
<text x="69.8" y="1215.3999999999999" font-size="24" fill="#ffffff" text-anchor="end" stroke="#ffffff" stroke-width="0.3">60</text>
<rect x="80.75" y="1229" width="2" height="6" fill="#050505"/>
<text x="81.75" y="1261" font-size="24" fill="#ffffff" text-anchor="middle" textLength="88" lengthAdjust="spacingAndGlyphs" stroke="#ffffff" stroke-width="0.3">00:00:00</text>
<rect x="168.14" y="1229" width="2" height="6" fill="#050505"/>
<text x="169.14" y="1291" font-size="24" fill="#ffffff" text-anchor="middle" textLength="88" lengthAdjust="spacingAndGlyphs" stroke="#ffffff" stroke-width="0.3">00:00:30</text>
<rect x="255.52999999999997" y="1229" width="2" height="6" fill="#050505"/>
<text x="256.53" y="1261" font-size="24" fill="#ffffff" text-anchor="middle" textLength="88" lengthAdjust="spacingAndGlyphs" stroke="#ffffff" stroke-width="0.3">00:01:00</text>
<rect x="342.92" y="1229" width="2" height="6" fill="#050505"/>
<text x="343.92" y="1291" font-size="24" fill="#ffffff" text-anchor="middle" textLength="88" lengthAdjust="spacingAndGlyphs" stroke="#ffffff" stroke-width="0.3">00:01:30</text>
<rect x="430.31" y="1229" width="2" height="6" fill="#050505"/>
<text x="431.31" y="1261" font-size="24" fill="#ffffff" text-anchor="middle" textLength="88" lengthAdjust="spacingAndGlyphs" stroke="#ffffff" stroke-width="0.3">00:02:00</text>
<rect x="517.7" y="1229" width="2" height="6" fill="#050505"/>
<text x="518.7" y="1291" font-size="24" fill="#ffffff" text-anchor="middle" textLength="88" lengthAdjust="spacingAndGlyphs" stroke="#ffffff" stroke-width="0.3">00:02:30</text>
<rect x="605.09" y="1229" width="2" height="6" fill="#050505"/>
<text x="606.09" y="1261" font-size="24" fill="#ffffff" text-anchor="middle" textLength="88" lengthAdjust="spacingAndGlyphs" stroke="#ffffff" stroke-width="0.3">00:03:00</text>
<rect x="692.48" y="1229" width="2" height="6" fill="#050505"/>
<text x="693.48" y="1291" font-size="24" fill="#ffffff" text-anchor="middle" textLength="88" lengthAdjust="spacingAndGlyphs" stroke="#ffffff" stroke-width="0.3">00:03:30</text>
<rect x="779.87" y="1229" width="2" height="6" fill="#050505"/>
<text x="780.87" y="1261" font-size="24" fill="#ffffff" text-anchor="middle" textLength="88" lengthAdjust="spacingAndGlyphs" stroke="#ffffff" stroke-width="0.3">00:04:00</text>
<rect x="867.26" y="1229" width="2" height="6" fill="#050505"/>
<text x="868.26" y="1291" font-size="24" fill="#ffffff" text-anchor="middle" textLength="88" lengthAdjust="spacingAndGlyphs" stroke="#ffffff" stroke-width="0.3">00:04:30</text>
<rect x="954.65" y="1229" width="2" height="6" fill="#050505"/>
<text x="955.65" y="1261" font-size="24" fill="#ffffff" text-anchor="middle" textLength="88" lengthAdjust="spacingAndGlyphs" stroke="#ffffff" stroke-width="0.3">00:05:00</text>
<rect x="1042.04" y="1229" width="2" height="6" fill="#050505"/>
<text x="1043.04" y="1291" font-size="24" fill="#ffffff" text-anchor="middle" textLength="88" lengthAdjust="spacingAndGlyphs" stroke="#ffffff" stroke-width="0.3">00:05:30</text>
<rect x="1129.43" y="1229" width="2" height="6" fill="#050505"/>
<text x="1130.43" y="1261" font-size="24" fill="#ffffff" text-anchor="middle" textLength="88" lengthAdjust="spacingAndGlyphs" stroke="#ffffff" stroke-width="0.3">00:06:00</text>
<rect x="1216.82" y="1229" width="2" height="6" fill="#050505"/>
<text x="1217.82" y="1291" font-size="24" fill="#ffffff" text-anchor="middle" textLength="88" lengthAdjust="spacingAndGlyphs" stroke="#ffffff" stroke-width="0.3">00:06:30</text>
<rect x="1304.21" y="1229" width="2" height="6" fill="#050505"/>
<text x="1305.21" y="1261" font-size="24" fill="#ffffff" text-anchor="middle" textLength="88" lengthAdjust="spacingAndGlyphs" stroke="#ffffff" stroke-width="0.3">00:07:00</text>
<rect x="1391.6" y="1229" width="2" height="6" fill="#050505"/>
<text x="1392.6" y="1291" font-size="24" fill="#ffffff" text-anchor="middle" textLength="88" lengthAdjust="spacingAndGlyphs" stroke="#ffffff" stroke-width="0.3">00:07:30</text>
<rect x="1478.99" y="1229" width="2" height="6" fill="#050505"/>
<text x="1479.99" y="1261" font-size="24" fill="#ffffff" text-anchor="middle" textLength="88" lengthAdjust="spacingAndGlyphs" stroke="#ffffff" stroke-width="0.3">00:08:00</text>
<rect x="1566.38" y="1229" width="2" height="6" fill="#050505"/>
<text x="1567.38" y="1291" font-size="24" fill="#ffffff" text-anchor="middle" textLength="88" lengthAdjust="spacingAndGlyphs" stroke="#ffffff" stroke-width="0.3">00:08:30</text>
<rect x="1653.77" y="1229" width="2" height="6" fill="#050505"/>
<text x="1654.77" y="1261" font-size="24" fill="#ffffff" text-anchor="middle" textLength="88" lengthAdjust="spacingAndGlyphs" stroke="#ffffff" stroke-width="0.3">00:09:00</text>
<rect x="1741.16" y="1229" width="2" height="6" fill="#050505"/>
<text x="1742.16" y="1291" font-size="24" fill="#ffffff" text-anchor="middle" textLength="88" lengthAdjust="spacingAndGlyphs" stroke="#ffffff" stroke-width="0.3">00:09:30</text>
<rect x="1828.55" y="1229" width="2" height="6" fill="#050505"/>
<text x="1829.55" y="1261" font-size="24" fill="#ffffff" text-anchor="middle" textLength="88" lengthAdjust="spacingAndGlyphs" stroke="#ffffff" stroke-width="0.3">00:10:00</text>
<rect x="1915.94" y="1229" width="2" height="6" fill="#050505"/>
<text x="1916.94" y="1291" font-size="24" fill="#ffffff" text-anchor="middle" textLength="88" lengthAdjust="spacingAndGlyphs" stroke="#ffffff" stroke-width="0.3">00:10:30</text>
<rect x="2003.33" y="1229" width="2" height="6" fill="#050505"/>
<text x="2004.33" y="1261" font-size="24" fill="#ffffff" text-anchor="middle" textLength="88" lengthAdjust="spacingAndGlyphs" stroke="#ffffff" stroke-width="0.3">00:11:00</text>
<rect x="2090.7200000000003" y="1229" width="2" height="6" fill="#050505"/>
<text x="2091.72" y="1291" font-size="24" fill="#ffffff" text-anchor="middle" textLength="88" lengthAdjust="spacingAndGlyphs" stroke="#ffffff" stroke-width="0.3">00:11:30</text>
<rect x="2178.11" y="1229" width="2" height="6" fill="#050505"/>
<text x="2179.11" y="1261" font-size="24" fill="#ffffff" text-anchor="middle" textLength="88" lengthAdjust="spacingAndGlyphs" stroke="#ffffff" stroke-width="0.3">00:12:00</text>
<rect x="2265.5" y="1229" width="2" height="6" fill="#050505"/>
<text x="2266.5" y="1291" font-size="24" fill="#ffffff" text-anchor="middle" textLength="88" lengthAdjust="spacingAndGlyphs" stroke="#ffffff" stroke-width="0.3">00:12:30</text>
<rect x="2352.89" y="1229" width="2" height="6" fill="#050505"/>
<text x="2353.89" y="1261" font-size="24" fill="#ffffff" text-anchor="middle" textLength="88" lengthAdjust="spacingAndGlyphs" stroke="#ffffff" stroke-width="0.3">00:13:00</text>
<rect x="2440.28" y="1229" width="2" height="6" fill="#050505"/>
<text x="2441.28" y="1291" font-size="24" fill="#ffffff" text-anchor="middle" textLength="88" lengthAdjust="spacingAndGlyphs" stroke="#ffffff" stroke-width="0.3">00:13:30</text>
<rect x="2527.67" y="1229" width="2" height="6" fill="#050505"/>
<text x="2528.67" y="1261" font-size="24" fill="#ffffff" text-anchor="middle" textLength="88" lengthAdjust="spacingAndGlyphs" stroke="#ffffff" stroke-width="0.3">00:14:00</text>
<polyline points="82.0,1132.5 87.6,1119.2 93.3,1105.9 99.2,1072.2 105.4,1101.4 110.7,1199.0 116.9,1219.9 122.8,1082.8 128.4,1066.8 134.6,1102.3 140.5,1046.4 146.5,1086.9 152.4,1086.9 158.2,1087.2 163.9,1184.8 169.2,1124.5 174.9,1041.5 181.3,1082.3 187.0,1031.4 193.2,1037.6 198.5,1066.8 204.4,1031.4 210.0,1164.4 216.2,1155.5 221.6,1051.8 227.8,1036.7 233.4,1031.4 239.3,1021.6 245.1,1016.3 250.8,1062.4 257.0,1154.6 262.9,1179.5 268.6,1042.0 274.2,1036.7 280.1,1061.5 285.9,1062.0 292.0,1066.8 297.8,1021.6 303.7,1147.5 309.4,1184.4 314.7,1065.9 320.9,1036.1 326.7,1056.2 332.4,1026.0 338.6,1015.4 344.5,1011.0 350.1,1101.4 356.0,1174.1 361.7,1056.2 367.5,1031.4 373.6,1051.8 379.4,1051.8 385.3,1026.6 390.9,1042.0 396.6,1031.4 403.0,1158.2 408.3,1128.0 414.0,1016.3 420.2,1010.6 426.1,1010.6 431.7,1041.5 437.1,1024.3 443.3,1011.3 449.1,1135.1 454.8,1174.1 460.5,1011.3 466.3,1046.4 472.2,1006.0 478.2,1010.6 484.1,1010.6 490.3,1006.0 495.9,1020.7 501.8,1164.4 507.6,1031.4 513.3,1051.8 519.5,1046.4 524.9,1042.0 527.0,1035.8 531.0,1005.6 536.8,1015.9 542.7,1005.6 548.4,1144.0 554.6,1137.8 560.4,1026.6 566.1,1061.5 571.4,1021.3 577.6,1041.5 583.5,1005.3 589.5,1005.3 595.4,1136.9 601.2,1174.1 606.9,1055.3 612.6,1041.5 618.4,1051.8 624.3,1041.5 630.0,1011.0 635.6,1016.3 642.0,1061.5 647.4,1163.5 652.7,1031.4 658.7,1051.4 665.1,1036.1 670.8,1011.3 676.4,1041.5 682.3,1006.0 688.1,1027.8 693.8,1142.2 700.0,1148.4 705.3,1011.0 711.2,1011.0 716.9,1011.0 723.1,1001.2 728.9,1017.2 735.0,1037.6 740.8,1119.2 746.7,1163.5 752.4,1051.8 758.0,1035.8 763.9,1011.0 769.7,1011.0 775.4,1031.4 781.6,1001.2 786.9,1119.2 793.1,1163.5 798.8,1041.5 804.7,1006.0 810.9,1021.6 816.6,1006.0 822.4,1006.0 828.3,1061.5 833.9,1066.8 839.6,1144.0 846.0,1137.8 851.3,1031.4 857.0,1036.1 863.2,1016.3 869.1,1066.8 874.7,1066.8 880.4,1071.6 886.3,1144.9 892.1,1174.1 897.4,1031.4 903.5,1021.3 909.3,1021.3 915.5,1006.0 921.2,1066.8 927.1,1071.6 932.9,1071.6 938.9,1149.3 944.8,1158.2 950.6,1021.3 956.3,1076.6 962.0,1011.0 970.0,1060.6 974.0,1071.6 979.8,1072.2 991.4,1168.8 996.7,1031.4 1002.9,1046.4 1008.8,1011.0 1014.4,1016.3 1020.1,1066.8 1026.5,1066.8 1032.2,1066.8 1038.4,1154.6 1044.2,1174.1 1049.6,1046.4 1055.2,1051.8 1060.9,1051.4 1067.3,1006.0 1073.0,1061.5 1078.6,1066.8 1090.4,1174.1 1101.7,1020.7 1107.6,1006.0 1119.1,1064.2 1124.8,1071.6 1130.6,1072.2 1136.8,1154.6 1142.5,1174.1 1148.3,1061.5 1154.2,1056.2 1159.9,1036.7 1166.1,1066.8 1171.9,1066.8 1177.6,1076.6 1183.8,1081.9 1189.1,1179.5 1195.0,1036.7 1200.7,1046.4 1206.3,1051.4 1212.2,1041.5 1218.1,1065.9 1224.1,1073.0 1229.9,1077.5 1235.8,1148.4 1241.5,1168.8 1246.8,1011.0 1253.0,1011.0 1258.8,1006.0 1264.5,1066.8 1270.7,1066.8 1276.6,1071.6 1288.5,1179.5 1293.8,1056.2 1299.6,1056.2 1305.3,1021.3 1311.5,1046.4 1317.4,1071.6 1323.1,1071.6 1328.7,1072.2 1334.6,1154.6 1340.4,1179.5 1346.1,1036.7 1352.3,1046.4 1357.6,1051.4 1363.5,1046.4 1369.5,1066.8 1375.4,1071.6 1381.2,1129.8 1386.9,1174.1 1392.6,1041.5 1398.4,1031.4 1404.3,1021.3 1410.3,1026.0 1413.0,1051.8 1416.6,1071.6 1422.3,1071.6 1428.2,1072.2 1433.5,1158.2 1439.7,1175.0 1445.4,1041.5 1451.2,1031.4 1457.1,1006.0 1462.8,1061.5 1469.0,1071.6 1474.8,1072.2 1480.5,1154.6 1485.8,1179.5 1492.0,1179.5 1497.3,1062.0 1503.2,1046.4 1508.9,1046.4 1515.1,1051.4 1520.9,1071.6 1526.6,1072.2 1532.3,1146.6 1538.7,1169.2 1544.7,1169.2 1550.0,1031.4 1555.9,1056.2 1561.7,1006.0 1567.4,1071.6 1573.6,1066.8 1578.9,1137.8 1585.1,1137.8 1590.8,1174.1 1596.7,1036.7 1602.5,1011.3 1608.2,1056.2 1613.9,1026.6 1620.3,1076.6 1625.9,1071.6 1631.6,1072.2 1637.5,1152.9 1643.3,1115.6 1655.2,1016.6 1661.1,1026.6 1666.7,1071.6 1672.4,1066.8 1678.3,1072.2 1689.8,1174.1 1695.5,1031.4 1701.3,1041.5 1707.5,1031.4 1713.2,1006.0 1719.1,1076.6 1725.3,1076.6 1730.9,1072.2 1736.8,1154.6 1742.6,1168.8 1748.7,1031.4 1754.5,1031.4 1760.4,1031.4 1766.1,1031.4 1771.7,1066.8 1777.6,1071.6 1783.4,1129.8 1789.1,1174.1 1795.3,1061.5 1801.2,1026.6 1806.9,1046.4 1812.5,1036.7 1818.4,1071.6 1824.2,1066.8 1829.9,1071.6 1835.6,1145.8 1841.4,1174.1 1852.6,1011.0 1856.0,1011.0 1858.8,1011.0 1865.0,1066.8 1870.6,1071.6 1876.5,1072.2 1888.0,1179.5 1893.3,1031.4 1899.5,1021.3 1905.4,1021.3 1911.1,1041.5 1917.8,1071.6 1923.5,1071.6 1929.2,1072.2 1935.0,1158.2 1940.9,1143.1 1946.6,1036.7 1951.9,1061.5 1957.5,1046.4 1963.9,1051.8 1969.6,1071.6 1975.3,1072.2 1987.0,1179.5 1992.7,1066.8 1998.9,1056.2 2004.7,1046.4 2010.4,1011.3 2016.1,1065.9 2021.9,1071.6 2028.1,1072.2 2033.8,1158.2 2039.7,1168.8 2045.0,1031.4 2051.2,1036.1 2057.9,1046.4 2063.6,1071.6 2069.3,1071.6 2074.6,1072.2 2086.3,1174.1 2092.0,1062.0 2098.2,1081.9 2104.1,1051.8 2109.7,1011.3 2115.4,1066.8 2121.3,1073.0 2127.1,1077.5 2132.8,1148.4 2138.5,1174.1 2144.3,1031.4 2150.2,1051.4 2155.8,1011.3 2162.1,1066.8 2167.9,1066.8 2173.9,1077.5 2179.8,1092.6 2185.6,1163.5 2191.3,1131.6 2197.0,1046.4 2202.8,1041.5 2208.2,1026.6 2214.4,1061.5 2220.1,1066.8 2225.9,1066.8 2232.1,1149.3 2237.4,1184.4 2242.8,1036.7 2249.5,1026.6 2255.2,1042.0 2261.4,1066.8 2267.2,1071.6 2272.9,1072.2 2279.1,1105.0 2284.4,1179.5 2290.6,1041.5 2299.0,1017.2 2301.9,1011.0 2307.8,1039.3 2313.6,1077.5 2319.3,1071.6 2325.0,1072.2 2330.8,1158.2 2337.0,1174.1 2342.4,1016.3 2348.6,1061.5 2354.4,1046.4 2360.1,1061.5 2365.8,1062.0 2371.6,1076.6 2376.9,1108.5 2383.1,1174.1 2388.8,1061.5 2394.7,1011.3 2400.5,1021.6 2406.2,1046.4 2412.4,1066.8 2418.3,1066.8 2423.9,1072.2 2430.1,1154.6 2436.0,1179.5 2441.7,1031.4 2447.4,1046.4 2453.7,1031.4 2459.1,1061.5 2464.7,1066.8 2470.9,1072.2 2476.8,1144.0 2482.5,1174.1 2488.1,1036.7 2494.0,1051.8 2499.9,1051.8 2505.5,1006.0 2511.2,1071.6 2517.1,1071.6 2522.9,1072.2" fill="none" stroke="#d42026" stroke-width="2" stroke-linejoin="miter" stroke-miterlimit="3"/>
<path d="M0 1308 Q1.5 1319 11 1319 L0 1319 Z" fill="#bdbdbd"/>
<path d="M2560 1308 Q2558.5 1319 2549 1319 L2560 1319 Z" fill="#c4c4c4"/>
</svg>
</body></html>
